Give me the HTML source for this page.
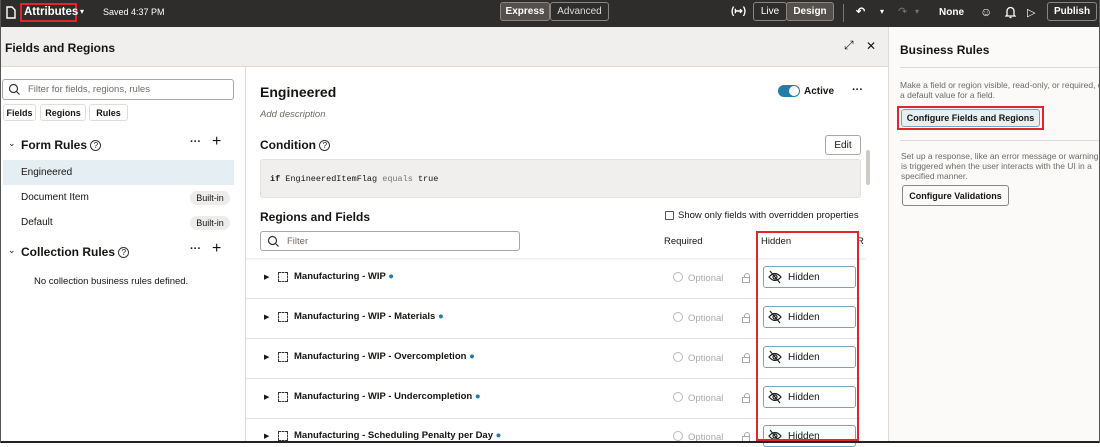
<!DOCTYPE html><html><head><style>
*{box-sizing:border-box;margin:0;padding:0}
body{width:1100px;height:443px;overflow:hidden;font-family:"Liberation Sans",sans-serif;font-size:10px;color:#161513;background:#fff;position:relative}
.a{position:absolute}
.top{left:0;top:0;width:1100px;height:27px;background:#2f2d2b;color:#fff}
.btn{position:absolute;border:1px solid #8a8580;border-radius:3px;font-weight:bold;display:flex;align-items:center;justify-content:center}
.b{font-weight:bold}
.hb{position:absolute;left:763px;width:93px;height:22px;border:1px solid #7aa3bd;border-radius:3px;font-size:10px;display:flex;align-items:center;padding-left:24px}
.row{position:absolute;left:246px;width:614px;height:40px;border-bottom:1px solid #e4e2df}
.chip{position:absolute;left:190px;width:40px;height:14px;border-radius:7px;background:#eeecea;font-size:9px;line-height:14px;text-align:center}
.q{display:inline-block;width:11px;height:11px;border:1px solid #333;border-radius:50%;font-size:8px;line-height:9px;text-align:center;font-weight:normal;vertical-align:1px}
.nm{position:absolute;left:294px;font-weight:bold;font-size:9.5px}
.ri{position:absolute;left:278px;width:10px;height:10px;border:1px dashed #333}
.opt{position:absolute;left:673px;color:#aaa;font-size:9.5px}
.opt i{display:inline-block;width:10px;height:10px;border:1px solid #bbb;border-radius:50%;vertical-align:-1px;margin-right:5px}
.lk{position:absolute;left:742px;width:8px;height:6px;border:1px solid #aaa}
.lk:before{content:"";position:absolute;left:1px;top:-5px;width:4px;height:4px;border:1px solid #aaa;border-bottom:none;border-radius:3px 3px 0 0}
</style></head><body>
<div class="a top">
 <svg class="a" style="left:6px;top:6px" width="10" height="13"><path d="M1 1h5l3 3v8H1z" fill="none" stroke="#fff" stroke-width="1.4"/></svg>
 <div class="a b" style="left:20px;top:3px;width:57px;height:19px;border:2px solid #e0262c;font-size:11.5px;line-height:15px;padding-left:2px;white-space:nowrap">Attributes</div>
 <div class="a" style="left:80px;top:7px;font-size:8px">▾</div>
 <div class="a" style="left:103px;top:7px;font-size:9px">Saved 4:37 PM</div>
 <div class="btn" style="left:500px;top:2px;width:50px;height:19px;background:#55504b">Express</div>
 <div class="btn" style="left:550px;top:2px;width:59px;height:19px;font-weight:normal;color:#ddd">Advanced</div>
 <div class="a b" style="left:731px;top:6px">(↦)</div>
 <div class="btn" style="left:753px;top:2px;width:34px;height:19px;font-weight:normal">Live</div>
 <div class="btn" style="left:786px;top:2px;width:48px;height:19px;background:#55504b">Design</div>
 <div class="a" style="left:843px;top:4px;width:1px;height:18px;background:#777"></div>
 <div class="a b" style="left:856px;top:5px;font-size:11px">↶</div><div class="a" style="left:880px;top:7px;font-size:8px">▾</div>
 <div class="a" style="left:898px;top:5px;font-size:11px;color:#777">↷</div><div class="a" style="left:915px;top:7px;font-size:8px;color:#777">▾</div>
 <div class="a b" style="left:939px;top:7px">None</div>
 <div class="a" style="left:980px;top:5px;font-size:12px">☺</div>
 <svg class="a" style="left:1005px;top:6px" width="11" height="13"><path d="M2 9V5a3.5 3.5 0 0 1 7 0v4l1 1H1z M4.5 11.5h2" fill="none" stroke="#fff" stroke-width="1.3"/></svg>
 <div class="a" style="left:1027px;top:6px;font-size:11px">▷</div>
 <div class="btn" style="left:1047px;top:2px;width:50px;height:19px">Publish</div>
</div>
<div class="a" style="left:0;top:27px;width:890px;height:40px;background:#f1efed;border-bottom:1px solid #dedbd7"></div>
<div class="a b" style="left:5px;top:41px;font-size:12px">Fields and Regions</div>
<div class="a" style="left:844px;top:38px;font-size:12px">⤢</div>
<div class="a" style="left:866px;top:39px;font-size:12px">✕</div>
<div class="a" style="left:888px;top:27px;width:212px;height:416px;background:#fbfaf9;border-left:1px solid #dedbd7"></div>
<div class="a b" style="left:900px;top:43px;font-size:12px">Business Rules</div>
<div class="a" style="left:900px;top:67px;width:200px;height:1px;background:#dedbd7"></div>
<div class="a" style="left:900px;top:80px;font-size:8.5px;color:#6f6b67;line-height:10px;white-space:nowrap">Make a field or region visible, read-only, or required, o<br>a default value for a field.</div>
<div class="a" style="left:897px;top:106px;width:147px;height:24px;border:2px solid #e0262c"></div>
<div class="btn" style="left:901px;top:109px;width:139px;height:18px;background:#e6f0f4;border-color:#7aa3bd;font-size:9px">Configure Fields and Regions</div>
<div class="a" style="left:900px;top:140px;width:200px;height:1px;background:#dedbd7"></div>
<div class="a" style="left:901px;top:151px;font-size:8.5px;color:#6f6b67;line-height:10px;white-space:nowrap">Set up a response, like an error message or warning, t<br>is triggered when the user interacts with the UI in a<br>specified manner.</div>
<div class="btn" style="left:902px;top:185px;width:107px;height:21px;font-size:9px">Configure Validations</div>
<div class="a" style="left:245px;top:67px;width:1px;height:376px;background:#dedbd7"></div>
<div class="a" style="left:2px;top:79px;width:232px;height:21px;border:1px solid #aaa6a1;border-radius:3px"></div>
<svg class="a" style="left:8px;top:83px" width="13" height="13"><circle cx="5.5" cy="5.5" r="4" fill="none" stroke="#333" stroke-width="1.2"/><path d="M8.5 8.5l3 3" stroke="#333" stroke-width="1.2"/></svg>
<div class="a" style="left:28px;top:84px;color:#6f6b67;font-size:9.5px">Filter for fields, regions, rules</div>
<div class="btn" style="left:3px;top:104px;width:33px;height:17px;border-color:#e0ddd9;font-size:9px">Fields</div>
<div class="btn" style="left:40px;top:104px;width:46px;height:17px;border-color:#e0ddd9;font-size:9px">Regions</div>
<div class="btn" style="left:89px;top:104px;width:39px;height:17px;border-color:#e0ddd9;font-size:9px">Rules</div>
<div class="a" style="left:8px;top:138px;font-size:9px">⌄</div>
<div class="a b" style="left:21px;top:138px;font-size:12px">Form Rules <span class="q">?</span></div>
<div class="a b" style="left:190px;top:136px;font-size:11px">···</div><div class="a" style="left:212px;top:133px;font-size:16px">+</div>
<div class="a" style="left:3px;top:160px;width:231px;height:25px;background:#e4eef3"></div>
<div class="a" style="left:21px;top:167px">Engineered</div>
<div class="a" style="left:21px;top:192px">Document Item</div><div class="chip" style="top:191px">Built-in</div>
<div class="a" style="left:21px;top:217px">Default</div><div class="chip" style="top:216px">Built-in</div>
<div class="a" style="left:8px;top:245px;font-size:9px">⌄</div>
<div class="a b" style="left:21px;top:245px;font-size:12px">Collection Rules <span class="q">?</span></div>
<div class="a b" style="left:190px;top:243px;font-size:11px">···</div><div class="a" style="left:212px;top:240px;font-size:16px">+</div>
<div class="a" style="left:34px;top:276px;font-size:9.5px">No collection business rules defined.</div>
<div class="a b" style="left:260px;top:84px;font-size:14px">Engineered</div>
<div class="a" style="left:260px;top:109px;font-style:italic;color:#6f6b67;font-size:9.5px">Add description</div>
<div class="a" style="left:778px;top:85px;width:22px;height:12px;border-radius:6px;background:#227ea8"><div class="a" style="right:1px;top:1px;width:10px;height:10px;border-radius:5px;background:#fff"></div></div>
<div class="a b" style="left:804px;top:86px">Active</div>
<div class="a b" style="left:852px;top:84px;font-size:11px">···</div>
<div class="a b" style="left:260px;top:138px;font-size:12px">Condition <span class="q">?</span></div>
<div class="btn" style="left:825px;top:135px;width:36px;height:20px;font-weight:normal;border-color:#aaa6a1">Edit</div>
<div class="a" style="left:260px;top:159px;width:601px;height:39px;background:#f1efed;border:1px solid #e4e2df;border-radius:3px"></div>
<div class="a" style="left:270px;top:174px;font-family:'Liberation Mono',monospace;font-size:8.5px"><b>if</b> EngineeredItemFlag <span style="color:#777">equals</span> true</div>
<div class="a" style="left:866px;top:150px;width:4px;height:35px;background:#cfccc8;border-radius:2px"></div>
<div class="a b" style="left:260px;top:210px;font-size:12px">Regions and Fields</div>
<div class="a" style="left:665px;top:211px;width:9px;height:9px;border:1px solid #555;border-radius:1px"></div>
<div class="a" style="left:678px;top:210px;font-size:9.5px">Show only fields with overridden properties</div>
<div class="a" style="left:260px;top:231px;width:260px;height:20px;border:1px solid #aaa6a1;border-radius:3px"></div>
<svg class="a" style="left:267px;top:235px" width="13" height="13"><circle cx="5.5" cy="5.5" r="4" fill="none" stroke="#333" stroke-width="1.2"/><path d="M8.5 8.5l3 3" stroke="#333" stroke-width="1.2"/></svg>
<div class="a" style="left:287px;top:236px;color:#6f6b67;font-size:9.5px">Filter</div>
<div class="a" style="left:664px;top:236px;font-size:9.5px">Required</div>
<div class="a" style="left:761px;top:236px;font-size:9.5px">Hidden</div>
<div class="a" style="left:857px;top:236px;font-size:9.5px">R</div>
<div class="a" style="left:246px;top:258px;width:620px;height:3px;background:linear-gradient(#eee,#fff)"></div>
<div class="row" style="top:259px"></div><div class="row" style="top:299px"></div><div class="row" style="top:339px"></div><div class="row" style="top:379px"></div>
<div class="a" style="left:264px;top:273px;font-size:7px">▶</div><div class="ri" style="top:272px"></div><div class="nm" style="top:271px">Manufacturing - WIP <span style="color:#227ea8">●</span></div>
<div class="a" style="left:264px;top:313px;font-size:7px">▶</div><div class="ri" style="top:312px"></div><div class="nm" style="top:311px">Manufacturing - WIP - Materials <span style="color:#227ea8">●</span></div>
<div class="a" style="left:264px;top:353px;font-size:7px">▶</div><div class="ri" style="top:352px"></div><div class="nm" style="top:351px">Manufacturing - WIP - Overcompletion <span style="color:#227ea8">●</span></div>
<div class="a" style="left:264px;top:393px;font-size:7px">▶</div><div class="ri" style="top:392px"></div><div class="nm" style="top:391px">Manufacturing - WIP - Undercompletion <span style="color:#227ea8">●</span></div>
<div class="a" style="left:264px;top:432px;font-size:7px">▶</div><div class="ri" style="top:431px"></div><div class="nm" style="top:430px">Manufacturing - Scheduling Penalty per Day <span style="color:#227ea8">●</span></div>
<div class="opt" style="top:272px"><i></i>Optional</div><div class="lk" style="top:277px"></div>
<div class="opt" style="top:312px"><i></i>Optional</div><div class="lk" style="top:317px"></div>
<div class="opt" style="top:352px"><i></i>Optional</div><div class="lk" style="top:357px"></div>
<div class="opt" style="top:392px"><i></i>Optional</div><div class="lk" style="top:397px"></div>
<div class="opt" style="top:431px"><i></i>Optional</div><div class="lk" style="top:436px"></div>
<div class="hb" style="top:266px">Hidden</div><div class="hb" style="top:306px">Hidden</div><div class="hb" style="top:346px">Hidden</div><div class="hb" style="top:386px">Hidden</div><div class="hb" style="top:425px">Hidden</div>
<svg class="a" style="left:766px;top:266px" width="20" height="180"><g fill="none" stroke="#222" stroke-width="1.2"><g id="e"><path d="M3 11q6-7 12 0q-6 7-12 0z"/><circle cx="9" cy="11" r="2"/><path d="M4 5l10 12"/></g><use href="#e" y="40"/><use href="#e" y="80"/><use href="#e" y="120"/><use href="#e" y="159"/></g></svg>
<div class="a" style="left:756px;top:231px;width:103px;height:210px;border:2px solid #e0262c"></div>
<div class="a" style="left:0;top:441px;width:1100px;height:2px;background:#222"></div>
<div class="a" style="left:0;top:0;width:1px;height:443px;background:#555"></div>
<div class="a" style="left:1099px;top:0;width:1px;height:443px;background:#555"></div>
</body></html>
